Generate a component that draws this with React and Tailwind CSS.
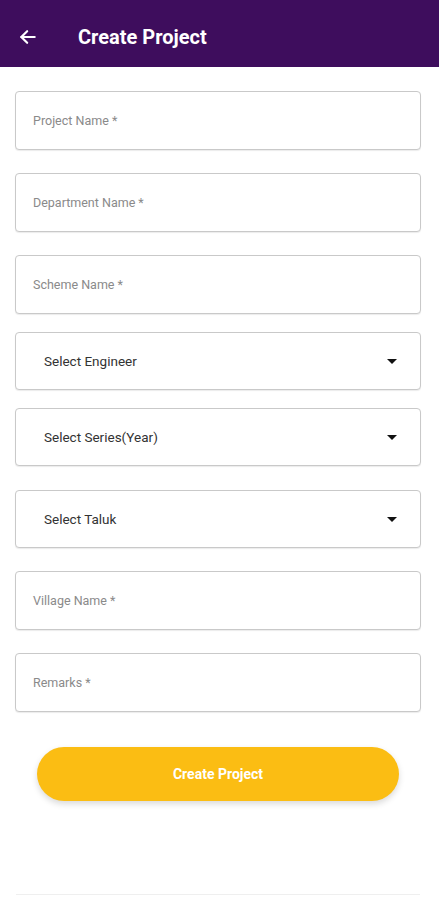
const font = { fontFamily: "Roboto, 'Liberation Sans', sans-serif" };

function TextField({ label, className = "" }) {
  return (
    <div
      className={`h-[59px] rounded-[4px] border border-[#c9c9c9] bg-white shadow-[0_1px_1px_rgba(0,0,0,0.08)] flex items-center pl-[17px] pt-[2px] ${className}`}
    >
      <span className="text-[12.5px] text-[#8a8a8a]">{label}</span>
    </div>
  );
}

function SelectField({ label, className = "" }) {
  return (
    <div
      className={`h-[58px] rounded-[4px] border border-[#c9c9c9] bg-white shadow-[0_1px_1px_rgba(0,0,0,0.08)] flex items-center justify-between pl-[28px] pr-[23px] pt-px ${className}`}
    >
      <span className="text-[13.5px] text-[#333333]">{label}</span>
      <svg width="10" height="5" viewBox="0 0 10 5">
        <path d="M0 0h10L5 5z" fill="#111111" />
      </svg>
    </div>
  );
}

export default function App() {
  return (
    <div className="h-[900px] bg-white flex flex-col" style={font}>
      <header className="h-[67px] pt-[6px] bg-[#3e0d5d] flex items-center shrink-0">
        <div className="w-[78px] pl-[18px] flex items-center">
          <svg width="20" height="20" viewBox="0 0 24 24" fill="none" stroke="white" strokeWidth="2.6" strokeLinecap="round" strokeLinejoin="round">
            <path d="M20 12H4" />
            <path d="M11 5l-7 7 7 7" />
          </svg>
        </div>
        <h1 className="text-white text-[20px] font-bold">Create Project</h1>
      </header>

      <div className="pl-[15px] pr-[18px] pt-[24px] flex flex-col">
        <TextField label="Project Name *" />
        <TextField label="Department Name *" className="mt-[23px]" />
        <TextField label="Scheme Name *" className="mt-[23px]" />
        <SelectField label="Select Engineer" className="mt-[18px]" />
        <SelectField label="Select Series(Year)" className="mt-[18px]" />
        <SelectField label="Select Taluk" className="mt-[24px]" />
        <TextField label="Village Name *" className="mt-[23px]" />
        <TextField label="Remarks *" className="mt-[23px]" />

        <button className="mt-[35px] mx-[22px] h-[54px] rounded-full bg-[#fbbd13] text-white text-[14px] font-bold shadow-[0_3px_6px_rgba(0,0,0,0.15)]">
          Create Project
        </button>
      </div>

      <div className="mt-auto mb-[5px] ml-[16px] mr-[19px] h-px bg-[#efefef]" />
    </div>
  );
}
